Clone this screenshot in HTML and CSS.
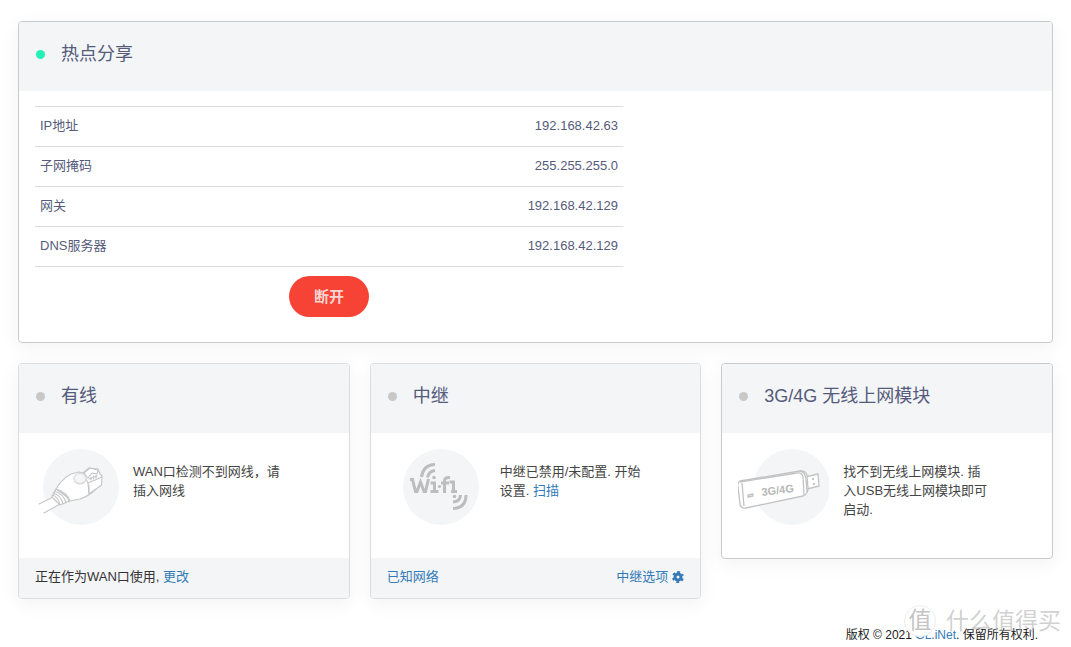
FILE: index.html
```html
<!DOCTYPE html>
<html lang="zh-CN">

<head>
  <meta charset="UTF-8">
  <meta name="viewport" content="width=device-width, initial-scale=1.0">
  <title>GL.iNet</title>
  <link rel="stylesheet" href="styles.css">
</head>

<body>
  <main class="page">

    <!-- Tethering -->
    <section class="card">
      <header class="card-header">
        <span class="dot dot-on"></span>
        <h2>热点分享</h2>
      </header>
      <div class="card-body tethering">
        <table class="info-table">
          <tbody>
            <tr><th scope="row">IP地址</th><td>192.168.42.63</td></tr>
            <tr><th scope="row">子网掩码</th><td>255.255.255.0</td></tr>
            <tr><th scope="row">网关</th><td>192.168.42.129</td></tr>
            <tr><th scope="row">DNS服务器</th><td>192.168.42.129</td></tr>
          </tbody>
        </table>
        <div class="actions">
          <button type="button" class="btn-danger">断开</button>
        </div>
      </div>
    </section>

    <div class="cards">
      <!-- Cable -->
      <section class="card card-light">
        <header class="card-header">
          <span class="dot"></span>
          <h2>有线</h2>
        </header>
        <div class="card-body media">
          <svg class="picture" width="84" height="76" viewBox="0 0 84 76" aria-hidden="true">
            <circle cx="46" cy="38" r="38" fill="#f3f5f7"/>
            <g fill="#fff" stroke="#c6c6c6" stroke-width="1.1" stroke-linejoin="round" stroke-linecap="round">
              <path stroke="none" d="M4 55 L17 48 L25 54.5 L9 64z"/>
              <path fill="none" d="M4 55 L17 48.5 M9 64 L25 55"/>
              <path d="M17 48 L21 40 L36 51 L25 56z"/>
              <path fill="none" d="M17 46 Q23 47 25 56 M18 44 Q26 46 28 55 M19 42 Q29 45 31 54 M21 40 Q32 43 34 53"/>
              <path d="M21 40 L25 34 Q30 28 36 25 L44 23 L52 25 L61 40 Q54 47 45 50 L35 52 Q32 43 21 40z"/>
              <path d="M48 24 L54 19 L63 20 L65 25 L67 27 L66.500 36 L54 45 L53 34z"/>
              <path d="M49 24 L55 19 L63 21 L62 25 L57 24 L53 29z"/>
              <path fill="none" d="M53 34 L67 28 M54 30 L62 27 M56 31 V28 M58.500 30 V27 M61 29 V26 M54 36 V44"/>
              <path fill="none" d="M39 29 Q40 35 45 35 Q51 34 51 29"/>
              <ellipse cx="45" cy="29.500" rx="6" ry="5" fill="#f3f5f7" stroke="#dcdcdc"/>
            </g>
          </svg>
          <p class="media-text">WAN口检测不到网线，请插入网线</p>
        </div>
        <footer class="card-footer">
          <span>正在作为WAN口使用, <a href="#">更改</a></span>
        </footer>
      </section>

      <!-- Repeater -->
      <section class="card card-light">
        <header class="card-header">
          <span class="dot"></span>
          <h2>中继</h2>
        </header>
        <div class="card-body media">
          <svg class="picture" width="99" height="76" viewBox="0 0 99 76" aria-hidden="true">
            <circle cx="54" cy="38" r="38" fill="#f3f5f7"/>
            <g fill="none" stroke="#bdbdbd" stroke-width="3">
              <path d="M23 30.500 H25.500 L28.500 42.500 H30 L33.500 33 L37 42.500 H38.500 L41.500 30"/>
              <path d="M43.500 34 H47.500 V43 M43.500 42.500 H51.500"/>
              <path d="M57.500 44 V32 Q57.500 28 63 28.500 M54 34 H62"/>
              <path d="M62.500 33 H66.500 V43 M64 42.500 H70"/>
              <path d="M34.500 28 Q36 16 48 15.500"/>
              <path d="M40.500 28.500 Q42 22 48 21.500"/>
              <path d="M66 53 Q73.500 52.500 73.500 46"/>
              <path d="M66 59.500 Q79 59 79 46"/>
            </g>
            <g fill="#bdbdbd">
              <circle cx="47" cy="28.500" r="1.800"/>
              <circle cx="52.500" cy="37.500" r="1.600"/>
              <circle cx="67.500" cy="47.500" r="1.800"/>
            </g>
          </svg>
          <p class="media-text">中继已禁用/未配置. 开始设置. <a href="#">扫描</a></p>
        </div>
        <footer class="card-footer">
          <a href="#">已知网络</a>
          <a href="#" class="options">中继选项
            <svg width="12" height="12" viewBox="0 0 12 12" aria-hidden="true">
              <g fill="none" stroke="#337ab7">
                <circle cx="6" cy="6" r="3" stroke-width="3"/>
                <circle cx="6" cy="6" r="5" stroke-width="2" stroke-dasharray="2.6 2.636" stroke-dashoffset="1.3" transform="rotate(-30 6 6)"/>
              </g>
            </svg>
          </a>
        </footer>
      </section>

      <!-- Modem -->
      <section class="card">
        <header class="card-header">
          <span class="dot"></span>
          <h2>3G/4G 无线上网模块</h2>
        </header>
        <div class="card-body media">
          <svg class="picture" width="91" height="76" viewBox="0 0 91 76" aria-hidden="true">
            <circle cx="54" cy="38" r="38" fill="#f3f5f7"/>
            <g fill="#fff" stroke="#c3c3c3" stroke-width="1.3" stroke-linejoin="round">
              <path d="M67 28 L80 25 L81 37 L69 40z"/>
              <path d="M2 32 Q-1 34 0 38 L2 55 Q3 60 8 59 L65 47 Q70 45 70 39 L69 27 Q69 22 62 22z"/>
              <path fill="none" d="M2 33 L59 24 Q64 23 65 28 L66 46 M4 34 L6 57 M62 22 Q67 23 68 30 L69 43"/>
              <path fill="none" d="M10 46 L15 45 V47 L10 48z"/>
            </g>
            <path d="M74 29 h2 v2 h-2z M75 34 h2 v2 h-2z" fill="#c3c3c3"/>
            <text class="modem-label" x="24" y="47" transform="rotate(-7 24 47)">3G/4G</text>
          </svg>
          <p class="media-text">找不到无线上网模块. 插入USB无线上网模块即可启动.</p>
        </div>
      </section>
    </div>
  </main>

  <footer class="copyright">
    版权 © 2021 <a href="#">GL.iNet</a>. 保留所有权利.
    <div class="watermark">
      <span class="seal">值</span>
      <span>什么值得买</span>
    </div>
  </footer>
</body>

</html>
```
FILE: styles.css
```css
* {
  box-sizing: border-box;
}

body {
  margin: 0;
  padding: 21px 18px 0;
  background-color: #fff;
  color: #333;
  font-family: "Liberation Sans", "Noto Sans CJK SC", sans-serif;
  font-size: 13px;
  line-height: 19px;
}

a {
  color: #337ab7;
  text-decoration: none;
}

h2,
p {
  margin: 0;
}

.page {
  display: flex;
  flex-direction: column;
  gap: 20px;
}

.cards {
  display: grid;
  grid-template-columns: repeat(3, 1fr);
  gap: 20px;
  align-items: start;
}

.card {
  background-color: #fff;
  border: 1px solid #c9cacc;
  border-radius: 4px;
  box-shadow: 0 5px 20px rgba(0, 0, 0, 0.05);
  overflow: hidden;
}

.card-light {
  border-color: #dcdddf;
}

.card-header {
  display: flex;
  align-items: center;
  gap: 16px;
  padding: 20px 17px 25px;
  background-color: #f3f5f7;
}

.card-header h2 {
  color: #555b7b;
  font-size: 18px;
  line-height: 24px;
  font-weight: normal;
}

.dot {
  width: 9px;
  height: 9px;
  border-radius: 50%;
  background-color: #c8c8c8;
}

.dot-on {
  background-color: #26f0b4;
}

.card-body {
  padding: 16px;
}

/* hotspot table */
.tethering {
  padding-top: 15px;
  padding-bottom: 25px;
}

.info-table {
  width: 100%;
  max-width: 588px;
  border-collapse: collapse;
  color: #555b7b;
}

.info-table tr {
  border-top: 1px solid #dcdcdc;
  border-bottom: 1px solid #dcdcdc;
}

.info-table th,
.info-table td {
  padding: 9px 5px 11px;
  font-weight: normal;
  text-align: left;
}

.info-table td {
  text-align: right;
}

.actions {
  max-width: 588px;
  padding-top: 9px;
  text-align: center;
}

.btn-danger {
  display: inline-block;
  padding: 10px 25px;
  border: 0;
  border-radius: 21px;
  background-color: #f64336;
  color: #fcd5d2;
  font-family: inherit;
  font-size: 15px;
  line-height: 21px;
  font-weight: bold;
  vertical-align: top;
  cursor: pointer;
}

/* picture + text */
.media {
  display: flex;
  gap: 14px;
  min-height: 125px;
}

.picture {
  flex: none;
}

.media-text {
  max-width: 148px;
  padding-top: 13px;
  color: #444;
}

.modem-label {
  fill: #b8b8b8;
  font-size: 11px;
  font-weight: bold;
}

.card-footer {
  display: flex;
  justify-content: space-between;
  padding: 9px 16px 12px;
  background-color: #f3f5f7;
}

.options {
  display: flex;
  align-items: center;
  gap: 4px;
}

.copyright {
  position: relative;
  padding: 27px 15px 0;
  color: #222;
  font-size: 12px;
  text-align: right;
}

/* stamp lying over the copyright line */
.watermark {
  position: absolute;
  right: -8px;
  top: 6px;
  display: flex;
  align-items: center;
  gap: 10px;
  color: rgba(170, 170, 170, 0.55);
  font-size: 23px;
  line-height: 32px;
  pointer-events: none;
}

.seal {
  width: 32px;
  height: 32px;
  border: 1px solid #eee;
  border-radius: 50%;
  background-color: #fff;
  color: #c4c4c4;
  line-height: 28px;
  text-align: center;
}
```
